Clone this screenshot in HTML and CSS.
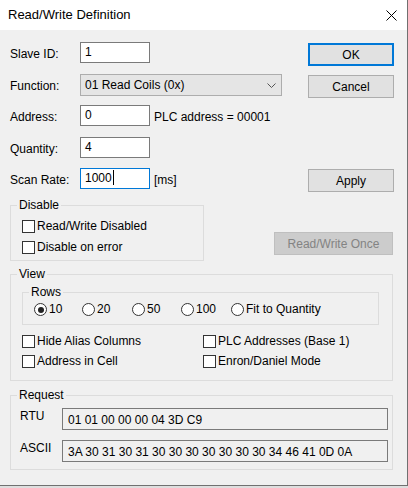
FILE: index.html
```html
<!DOCTYPE html>
<html>
<head>
<meta charset="utf-8">
<title>Read/Write Definition</title>
<link rel="stylesheet" href="styles.css">
</head>
<body>
<div class="window">
  <div class="titlebar">
    <span class="title">Read/Write Definition</span>
    <svg class="close" width="11" height="11" viewBox="0 0 11 11"><path d="M0.5 0.5L10.5 10.5M10.5 0.5L0.5 10.5" stroke="#000" stroke-width="1" fill="none"/></svg>
  </div>
  <div class="client">
    <div class="top">
      <div class="form">
        <div class="lbl">Slave ID:</div>
        <div class="edit">1</div>
        <div></div>

        <div class="lbl">Function:</div>
        <div class="select"><span>01 Read Coils (0x)</span><svg class="chev" width="9" height="5" viewBox="0 0 9 5"><path d="M0.5 0.5L4.5 4.5L8.5 0.5" stroke="#555" stroke-width="1" fill="none"/></svg></div>

        <div class="lbl">Address:</div>
        <div class="edit">0</div>
        <div class="side">PLC address = 00001</div>

        <div class="lbl">Quantity:</div>
        <div class="edit">4</div>
        <div></div>

        <div class="lbl">Scan Rate:</div>
        <div class="edit focus">1000<span class="caret"></span></div>
        <div class="side">[ms]</div>
      </div>
      <div class="buttons">
        <div class="btn default ok">OK</div>
        <div class="btn cancel">Cancel</div>
        <div class="btn apply">Apply</div>
      </div>
    </div>

    <div class="mid">
      <div class="group disable">
        <div class="legend">Disable</div>
        <div class="col">
          <div class="check"><span class="cb"></span><span class="txt">Read/Write Disabled</span></div>
          <div class="check"><span class="cb"></span><span class="txt">Disable on error</span></div>
        </div>
      </div>
      <div class="btn disabled rw-once">Read/Write Once</div>
    </div>

    <div class="group view">
      <div class="legend">View</div>
      <div class="view-body">
        <div class="group rows">
          <div class="legend">Rows</div>
          <div class="radios">
            <div class="radio"><span class="rb on"></span><span class="txt">10</span></div>
            <div class="radio"><span class="rb"></span><span class="txt">20</span></div>
            <div class="radio"><span class="rb"></span><span class="txt">50</span></div>
            <div class="radio"><span class="rb"></span><span class="txt">100</span></div>
            <div class="radio"><span class="rb"></span><span class="txt">Fit to Quantity</span></div>
          </div>
        </div>
        <div class="checks">
          <div class="check"><span class="cb"></span><span class="txt">Hide Alias Columns</span></div>
          <div class="check"><span class="cb"></span><span class="txt">PLC Addresses (Base 1)</span></div>
          <div class="check"><span class="cb"></span><span class="txt">Address in Cell</span></div>
          <div class="check"><span class="cb"></span><span class="txt">Enron/Daniel Mode</span></div>
        </div>
      </div>
    </div>

    <div class="group request">
      <div class="legend">Request</div>
      <div class="req">
        <div class="rlbl">RTU</div>
        <div class="rbox">01 01 00 00 00 04 3D C9</div>
        <div class="rlbl">ASCII</div>
        <div class="rbox">3A 30 31 30 31 30 30 30 30 30 30 30 34 46 41 0D 0A</div>
      </div>
    </div>
  </div>
</div>
</body>
</html>
```

FILE: styles.css
```css
* { box-sizing: border-box; }
html, body { margin: 0; padding: 0; }
body {
  width: 408px;
  height: 488px;
  background: #dedede;
  font-family: "Liberation Sans", Arial, sans-serif;
  font-size: 12px;
  color: #000;
  overflow: hidden;
}
.window {
  width: 408px;
  height: 486px;
  border-right: 1px solid #707070;
  border-bottom: 1px solid #707070;
  background: #f0f0f0;
  display: flex;
  flex-direction: column;
}
.titlebar {
  height: 30px;
  flex: none;
  background: #fff;
  display: flex;
  align-items: center;
  padding-left: 8px;
  font-size: 13px;
  line-height: 30px;
}
.close { margin-left: auto; margin-right: 10px; }
.client {
  flex: 1;
  display: flex;
  flex-direction: column;
  align-items: flex-start;
  padding-left: 10px;
}
.top { display: flex; width: 397px; }
.form {
  margin-top: 12px;
  display: grid;
  grid-template-columns: 70px 70px auto;
  grid-template-rows: 32px 31px 32px 31px 21px;
  align-items: start;
}
.lbl { padding-top: 2px; line-height: 21px; }
.edit {
  width: 70px;
  height: 21px;
  border: 1px solid #7a7a7a;
  background: #fff;
  line-height: 19px;
  padding-left: 4px;
  white-space: nowrap;
}
.edit.focus { border-color: #0078d7; }
.caret {
  display: inline-block;
  width: 1px;
  height: 15px;
  background: #000;
  vertical-align: -3px;
  margin-left: 1px;
}
.side { padding-left: 4px; padding-top: 2px; line-height: 21px; white-space: nowrap; }
.select {
  grid-column: 2 / 4;
  width: 202px;
  height: 22px;
  border: 1px solid #adadad;
  background: #e5e5e5;
  display: flex;
  align-items: center;
  padding: 0 5px 0 4px;
  line-height: 20px;
}
.chev { margin-left: auto; }
.buttons {
  margin-left: auto;
  margin-right: 13px;
  width: 86px;
  display: flex;
  flex-direction: column;
}
.btn {
  height: 23px;
  border: 1px solid #adadad;
  background: #e1e1e1;
  display: flex;
  align-items: center;
  justify-content: center;
  white-space: nowrap;
}
.btn.default { border: 2px solid #0078d7; }
.ok { margin-top: 13px; }
.cancel { margin-top: 9px; }
.apply { margin-top: 71px; }
.btn.disabled { background: #cccccc; border-color: #bfbfbf; color: #838383; }

/* group boxes */
.group { border: 1px solid #dcdcdc; }
.legend {
  width: max-content;
  margin: -8px 0 0 6px;
  padding: 0 2px;
  line-height: 14px;
  background: #f0f0f0;
  white-space: nowrap;
}

.mid {
  display: flex;
  align-items: flex-start;
  width: 383px;
  margin-top: 13px;
}
.disable { width: 194px; }
.col {
  padding: 8px 0 6px 11px;
  display: flex;
  flex-direction: column;
  gap: 8px;
}
.rw-once { margin-left: auto; margin-top: 27px; width: 119px; }

.check { display: flex; align-items: center; height: 13px; }
.cb {
  width: 13px;
  height: 13px;
  flex: none;
  border: 1px solid #333;
  background: #fff;
}
.check .txt { margin-left: 2px; line-height: 13px; white-space: nowrap; }

.view { margin-top: 13px; width: 383px; }
.view-body { padding: 11px 0 12px 11px; }
.rows { width: 357px; }
.radios {
  padding: 4px 0 8px 11px;
  display: grid;
  grid-template-columns: 48px 50px 49px 50px auto;
}
.radio { display: flex; align-items: center; height: 13px; }
.rb {
  width: 13px;
  height: 13px;
  flex: none;
  border: 1px solid #333;
  border-radius: 50%;
  background: #fff;
  display: flex;
  align-items: center;
  justify-content: center;
}
.rb.on::after {
  content: "";
  width: 6px;
  height: 6px;
  border-radius: 50%;
  background: #222;
}
.radio .txt { margin-left: 2px; line-height: 13px; white-space: nowrap; }
.checks {
  margin-top: 10px;
  display: grid;
  grid-template-columns: 181px auto;
  row-gap: 7px;
}

.request { margin-top: 14px; width: 383px; }
.req {
  padding: 6px 0 7px 9px;
  display: grid;
  grid-template-columns: 42px 326px;
  row-gap: 10px;
  align-items: start;
}
.rlbl { padding-top: 1px; line-height: 14px; }
.rbox {
  height: 22px;
  border: 1px solid #7a7a7a;
  background: #f0f0f0;
  padding: 3px 0 0 5px;
  line-height: 17px;
  white-space: nowrap;
}
```
